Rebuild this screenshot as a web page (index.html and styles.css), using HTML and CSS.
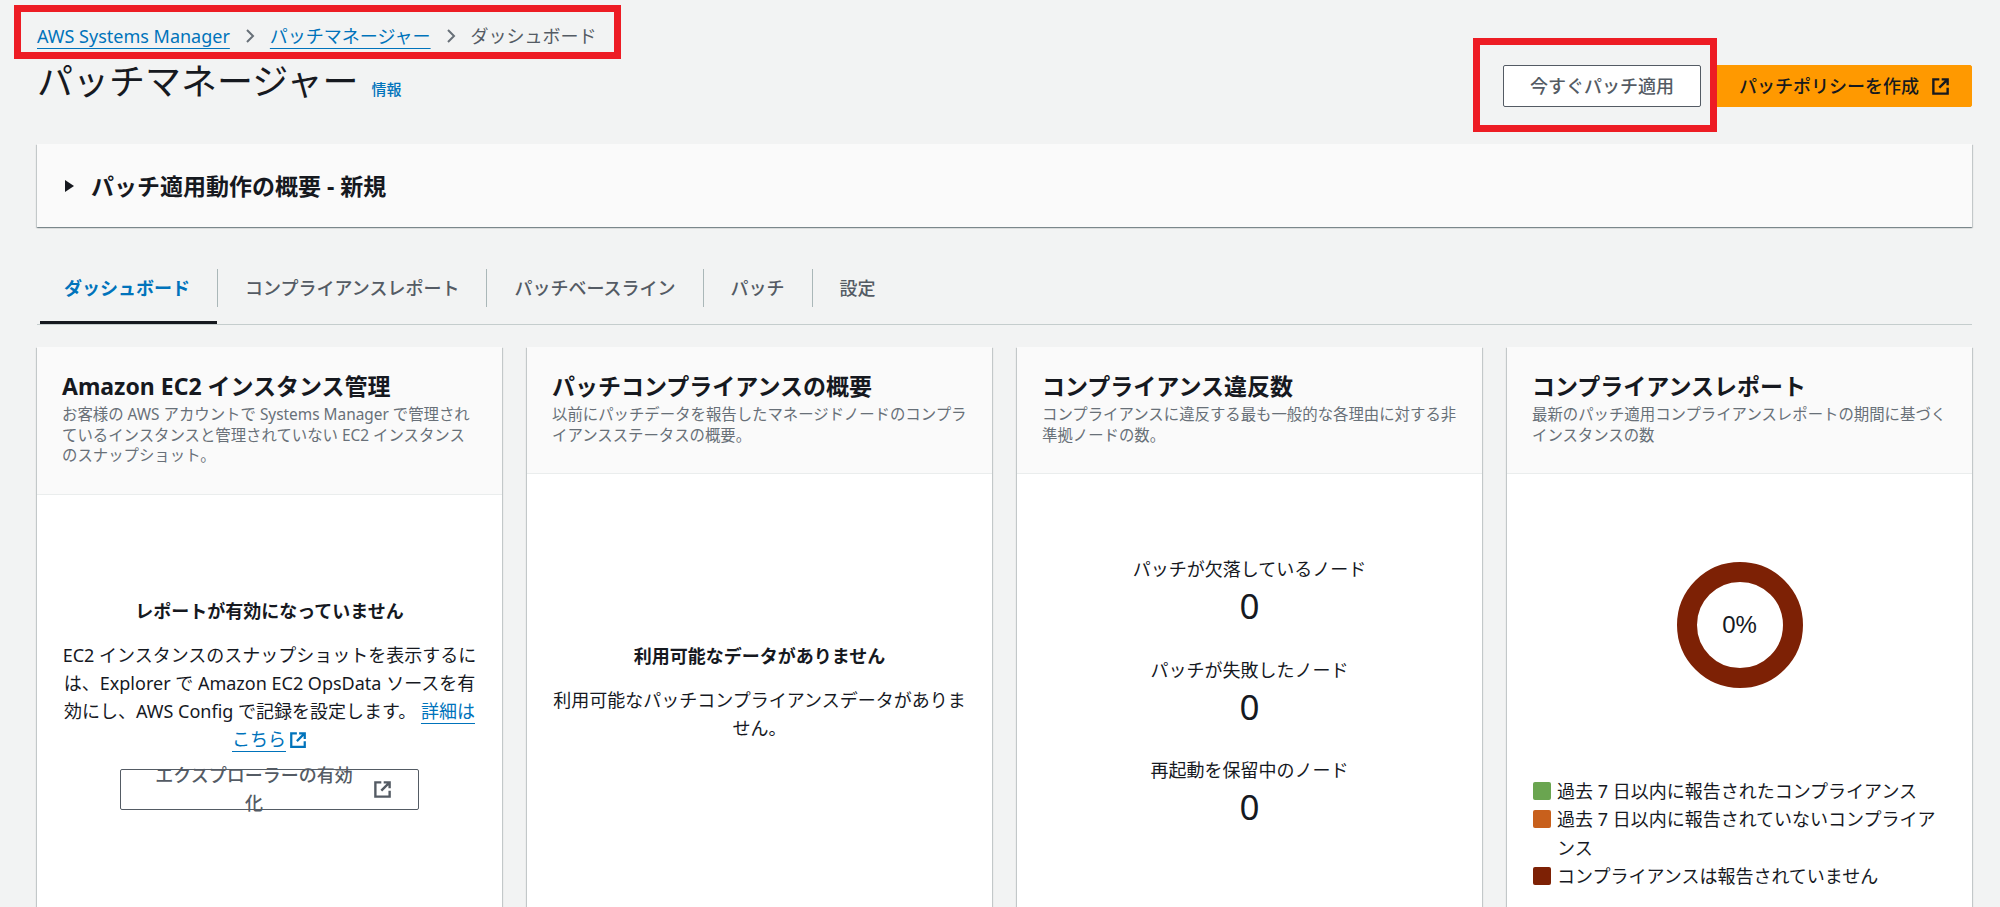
FILE: index.html
```html
<!DOCTYPE html>
<html lang="ja">
<head>
<meta charset="UTF-8" />
<meta name="viewport" content="width=device-width, initial-scale=1" />
<title>パッチマネージャー</title>
<link rel="stylesheet" href="styles.css">
</head>
<body>

<nav class="crumbs">
<a href="#" class="link">AWS Systems Manager</a>
<svg class="chevron" viewBox="0 0 10 16"><path d="M2 2l6 6-6 6" /></svg>
<a href="#" class="link">パッチマネージャー</a>
<svg class="chevron" viewBox="0 0 10 16"><path d="M2 2l6 6-6 6" /></svg>
<span>ダッシュボード</span>
</nav>

<header class="page-head">
<div class="page-title">
<h1>パッチマネージャー</h1>
<a href="#" class="info">情報</a>
</div>
<div class="actions">
<button class="btn btn-apply">今すぐパッチ適用</button>
<button class="btn btn-primary">パッチポリシーを作成
<svg class="ext" viewBox="0 0 16 16"><path d="M14 9v5H2V2h5M9 2h5v5M14 2L7 9" /></svg>
</button>
</div>
</header>

<section class="summary">
<span class="caret"></span>
<h2>パッチ適用動作の概要 - 新規</h2>
</section>

<div class="tabs">
<a href="#" class="tab active">ダッシュボード</a>
<a href="#" class="tab">コンプライアンスレポート</a>
<a href="#" class="tab">パッチベースライン</a>
<a href="#" class="tab">パッチ</a>
<a href="#" class="tab">設定</a>
</div>

<main class="cards">

<article class="card">
<div class="card-head">
<h3>Amazon EC2 インスタンス管理</h3>
<p>お客様の AWS アカウントで Systems Manager で管理されているインスタンスと管理されていない EC2 インスタンスのスナップショット。</p>
</div>
<div class="card-body body-ec2">
<b>レポートが有効になっていません</b>
<p>EC2 インスタンスのスナップショットを表示するには、Explorer で Amazon EC2 OpsData ソースを有効にし、AWS Config で記録を設定します。 <a href="#" class="link">詳細はこちら</a><svg class="ext ext-link" viewBox="0 0 16 16"><path d="M14 9v5H2V2h5M9 2h5v5M14 2L7 9" /></svg></p>
<button class="btn btn-outline">エクスプローラーの有効化
<svg class="ext" viewBox="0 0 16 16"><path d="M14 9v5H2V2h5M9 2h5v5M14 2L7 9" /></svg>
</button>
</div>
</article>

<article class="card">
<div class="card-head">
<h3>パッチコンプライアンスの概要</h3>
<p>以前にパッチデータを報告したマネージドノードのコンプライアンスステータスの概要。</p>
</div>
<div class="card-body body-empty">
<b>利用可能なデータがありません</b>
<p>利用可能なパッチコンプライアンスデータがありません。</p>
</div>
</article>

<article class="card">
<div class="card-head">
<h3>コンプライアンス違反数</h3>
<p>コンプライアンスに違反する最も一般的な各理由に対する非準拠ノードの数。</p>
</div>
<div class="card-body body-counts">
<div class="count"><span>パッチが欠落しているノード</span><strong>0</strong></div>
<div class="count"><span>パッチが失敗したノード</span><strong>0</strong></div>
<div class="count"><span>再起動を保留中のノード</span><strong>0</strong></div>
</div>
</article>

<article class="card">
<div class="card-head">
<h3>コンプライアンスレポート</h3>
<p>最新のパッチ適用コンプライアンスレポートの期間に基づくインスタンスの数</p>
</div>
<div class="card-body body-report">
<div class="donut">0%</div>
<ul class="legend">
<li><i class="swatch green"></i>過去 7 日以内に報告されたコンプライアンス</li>
<li><i class="swatch orange"></i>過去 7 日以内に報告されていないコンプライアンス</li>
<li><i class="swatch brown"></i>コンプライアンスは報告されていません</li>
</ul>
</div>
</article>

</main>

<div class="mark mark-crumbs"></div>
<div class="mark mark-button"></div>

</body>
</html>
```

FILE: styles.css
```css
html, body {
height: 100%;
overflow: hidden;
}
body {
margin: 0;
padding: 0 28px 0 37px;
background: #f2f3f3;
color: #16191f;
font-family: "Noto Sans", "Noto Sans CJK JP", sans-serif;
font-size: 18px;
line-height: 28px;
position: relative;
box-sizing: border-box;
}
a {
text-decoration: none;
}
.link {
color: #0073bb;
text-decoration: underline;
text-decoration-thickness: 1px;
text-underline-offset: 5px;
}

/* breadcrumb */
.crumbs {
display: flex;
align-items: center;
gap: 15px;
padding-top: 22px;
height: 28px;
color: #545b64;
}
.chevron {
width: 10px;
height: 16px;
fill: none;
stroke: #687078;
stroke-width: 2;
}

/* title row */
.page-head {
display: flex;
justify-content: space-between;
align-items: flex-start;
margin-top: 10px;
height: 84px;
}
.page-title {
display: flex;
align-items: baseline;
gap: 13px;
}
h1 {
margin: 0;
font-size: 36px;
line-height: 44px;
font-weight: 400;
}
.info {
color: #0073bb;
font-size: 15px;
font-weight: 500;
}
.actions {
display: flex;
gap: 11px;
margin-top: 5px;
}
.btn {
display: inline-flex;
align-items: center;
justify-content: center;
gap: 12px;
height: 42px;
padding: 0 26px;
border-radius: 2px;
font: inherit;
font-weight: 500;
cursor: pointer;
box-sizing: border-box;
}
.btn-apply, .btn-outline {
background: #fff;
border: 1px solid #545b64;
color: #545b64;
}
.btn-primary {
background: #f90;
border: 1px solid #f90;
color: #16191f;
padding: 0 21px 0 26px;
}
.ext {
width: 19px;
height: 19px;
fill: none;
stroke: currentColor;
stroke-width: 2;
flex: none;
}
.ext-link {
color: #0073bb;
width: 18px;
height: 18px;
margin-left: 3px;
vertical-align: -3px;
}

/* collapsed panel */
.summary {
display: flex;
align-items: center;
gap: 17px;
height: 83px;
padding-left: 28px;
background: #fafafa;
box-shadow: 0 1px 1px 0 rgba(0,28,36,0.3), 1px 1px 1px 0 rgba(0,28,36,0.15), -1px 1px 1px 0 rgba(0,28,36,0.15);
}
.caret {
width: 0;
height: 0;
border-left: 9px solid #16191f;
border-top: 6px solid transparent;
border-bottom: 6px solid transparent;
}
h2 {
margin: 0;
font-size: 23px;
font-weight: 700;
}

/* tabs */
.tabs {
display: flex;
margin-top: 42px;
padding-bottom: 17px;
border-bottom: 1px solid #c5cdcd;
}
.tab {
position: relative;
padding: 0 27px;
height: 38px;
line-height: 38px;
color: #545b64;
font-weight: 500;
border-right: 1px solid #aab7b8;
}
.tab:last-child {
border-right: none;
}
.tab.active {
color: #0073bb;
font-weight: 700;
}
.tab.active::after {
content: "";
position: absolute;
left: 3px;
right: 0;
bottom: -17px;
height: 3px;
background: #16191f;
}

/* cards */
.cards {
display: grid;
grid-template-columns: repeat(4, 465px);
gap: 25px;
margin-top: 22px;
}
.card {
display: flex;
flex-direction: column;
height: 800px;
background: #fff;
box-shadow: 0 1px 1px 0 rgba(0,28,36,0.3), 1px 1px 1px 0 rgba(0,28,36,0.15), -1px 1px 1px 0 rgba(0,28,36,0.15);
}
.card-head {
padding: 24px 25px 27px;
background: #fafafa;
border-bottom: 1px solid #eaeded;
}
h3 {
margin: 0 0 4px;
font-size: 23px;
line-height: 30px;
font-weight: 700;
}
.card-head p {
margin: 0;
font-size: 15.4px;
line-height: 20.5px;
color: #687078;
}
.card-body {
padding-left: 25px;
padding-right: 25px;
text-align: center;
}
.card-body p {
margin: 16px 0 0;
}
.body-ec2 {
padding-top: 102px;
}
.btn-outline {
margin-top: 16px;
width: 299px;
height: 41px;
}
.body-empty {
padding-top: 168px;
}
.body-counts {
padding-top: 81px;
}
.count {
display: flex;
flex-direction: column;
height: 100.5px;
}
.count strong {
font-size: 35px;
font-weight: 400;
line-height: 44px;
margin-top: 1px;
}

/* donut + legend */
.body-report {
padding-top: 88px;
}
.donut {
display: flex;
align-items: center;
justify-content: center;
width: 126px;
height: 126px;
margin: 0 auto;
border: 20px solid #7d2105;
border-radius: 50%;
box-sizing: border-box;
font-family: "Liberation Sans", sans-serif;
font-size: 24px;
}
.legend {
list-style: none;
margin: 89px 0 0;
padding: 0 0 0 1px;
text-align: left;
}
.legend li {
position: relative;
padding-left: 24px;
line-height: 28.4px;
}
.swatch {
position: absolute;
left: 0;
top: 5px;
width: 18px;
height: 18px;
border-radius: 2px;
}
.green { background: #6aa550; }
.orange { background: #c8601c; }
.brown { background: #7d2105; }

/* red annotation boxes drawn over the screenshot */
.mark {
position: absolute;
border: 7px solid #ed1c24;
box-sizing: border-box;
}
.mark-crumbs {
left: 14px;
top: 5px;
width: 607px;
height: 54px;
}
.mark-button {
left: 1473px;
top: 38px;
width: 244px;
height: 94px;
}
```
